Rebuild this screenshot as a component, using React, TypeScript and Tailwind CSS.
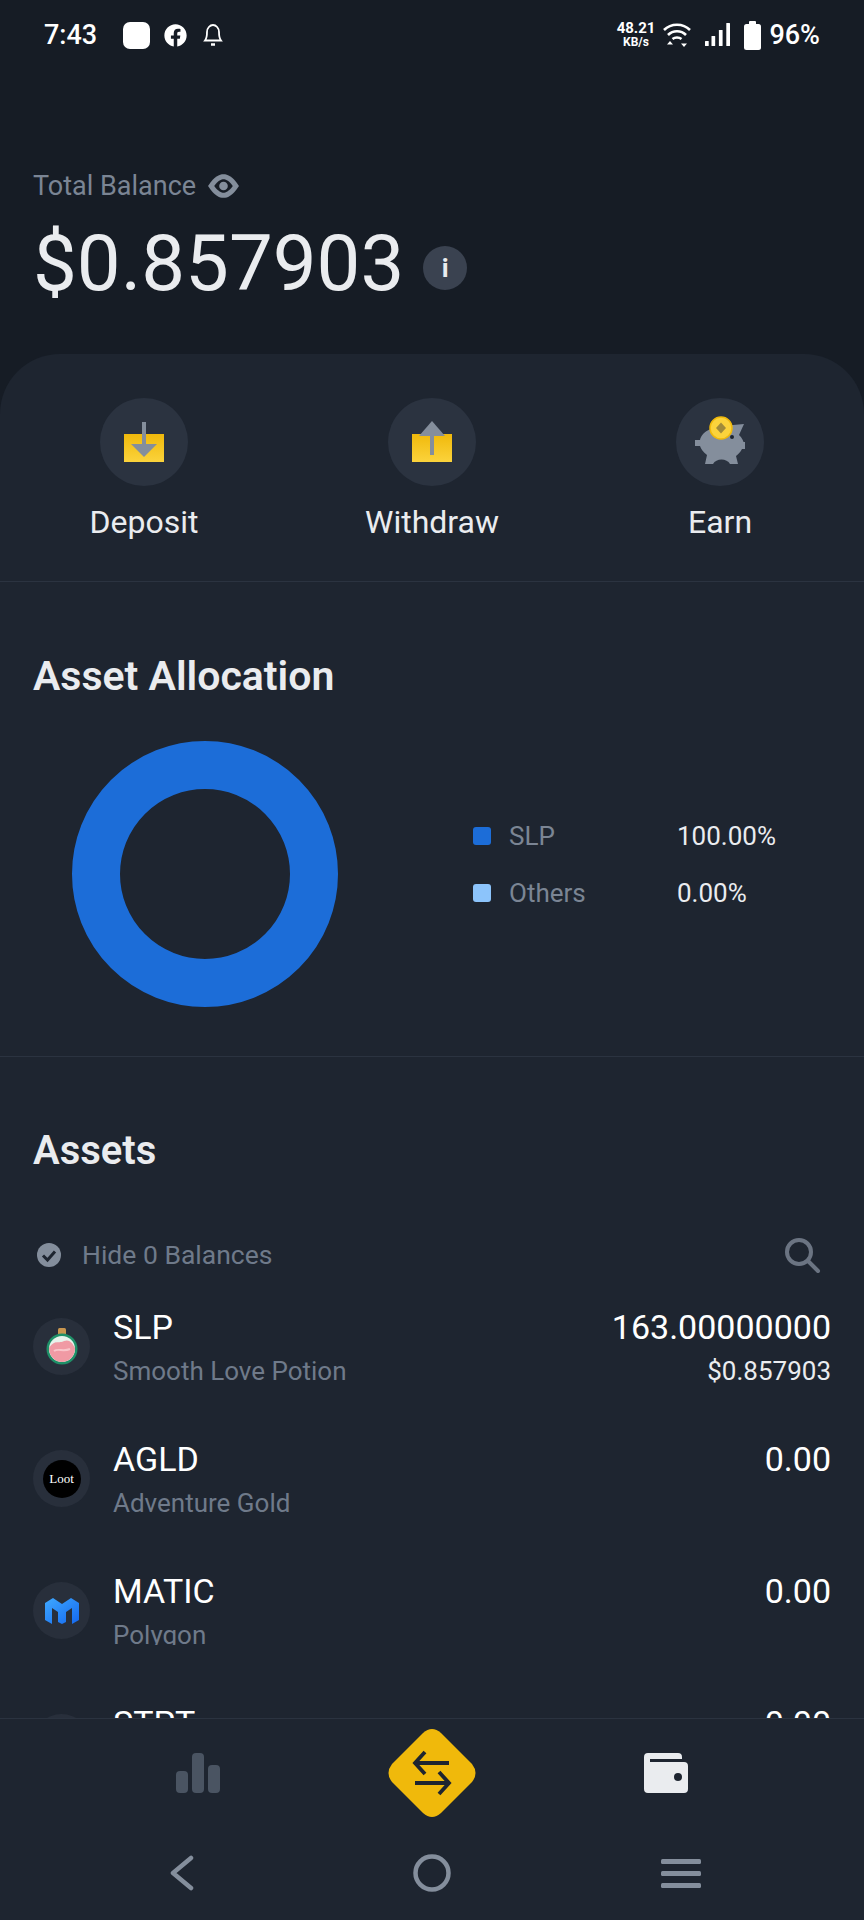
import React from "react";
import { FaFacebook } from "react-icons/fa";

const Wifi = () => (
  <svg width="28" height="26" viewBox="0 0 28 26" fill="none" stroke="#fff" strokeWidth="2.6">
    <path d="M1 8 C8 1 20 1 27 8" />
    <path d="M5 13 C10 8 18 8 23 13" />
    <path d="M9.5 17 C12 15 16 15 18.5 17" />
    <path d="M7 19 l-3 3.5 h6z M21 25 l-3 -3.5 h6z" fill="#fff" stroke="none" />
  </svg>
);
const Signal = () => (
  <svg width="25" height="24" viewBox="0 0 27 24" preserveAspectRatio="none" fill="#fff">
    <rect x="0" y="18" width="4" height="5" rx="0.5" />
    <rect x="7" y="13" width="4" height="10" rx="0.5" />
    <rect x="15" y="7" width="4" height="16" rx="0.5" />
    <rect x="23" y="0" width="4" height="23" rx="0.5" />
  </svg>
);
const Battery = () => (
  <svg width="17" height="29" viewBox="0 0 17 29" fill="#fff">
    <rect x="5" y="0" width="7" height="4" rx="1" />
    <rect x="0" y="3" width="17" height="26" rx="2.5" />
  </svg>
);
const Eye = () => (
  <svg width="33" height="26" viewBox="0 0 32 25">
    <path d="M1 12.5 C7 3 12 1 16 1 C20 1 25 3 31 12.5 C25 22 20 24 16 24 C12 24 7 22 1 12.5Z" fill="#848e9c" />
    <path d="M7 12.5 C11 7 14 6 16 6 C18 6 21 7 25 12.5 C21 18 18 19 16 19 C14 19 11 18 7 12.5Z" fill="#161c25" />
    <circle cx="16" cy="12.5" r="4.2" fill="#848e9c" />
  </svg>
);
const DepositIcon = () => (
  <svg width="44" height="44" viewBox="0 0 44 44">
    <defs>
      <linearGradient id="y1" x1="0" y1="0" x2="0" y2="1">
        <stop offset="0" stopColor="#f0b90b" />
        <stop offset="1" stopColor="#fbd33c" />
      </linearGradient>
    </defs>
    <rect x="2" y="14" width="40" height="28" fill="url(#y1)" />
    <rect x="20" y="2" width="4" height="22" fill="#848e9c" />
    <path d="M9 24 H35 L22 37Z" fill="#848e9c" />
  </svg>
);
const WithdrawIcon = () => (
  <svg width="44" height="44" viewBox="0 0 44 44">
    <rect x="2" y="14" width="40" height="28" fill="url(#y1)" />
    <path d="M9 16 L22 1 L35 16Z" fill="#848e9c" />
    <rect x="20" y="14" width="4" height="21" fill="#848e9c" />
  </svg>
);
const EarnIcon = () => (
  <svg width="52" height="52" viewBox="0 0 52 52">
    <path d="M39 9 L50 8 L45 19 C48 22 49 24 49.500 26 H51 V33 H48 C46 37 44 38 42 40 L44 48 L36 48 C33 42 22 42 19 48 L11 48 L13 39 C9 36 7 33 6 30 L1 30 V24 L6 24 C8 15 20 9 39 9Z" fill="#848e9c" />
    <circle cx="27" cy="12" r="11" fill="#fbd33c" stroke="#f0b90b" strokeWidth="1.5" />
    <path d="M27 6.500 L32 12 L27 17.500 L22 12Z" fill="#a08a3a" />
    <circle cx="38" cy="21" r="2" fill="#1e2530" />
  </svg>
);
const PotionIcon = () => (
  <svg width="32" height="38" viewBox="0 0 32 38">
    <rect x="12" y="0" width="8" height="7" rx="1.500" fill="#c9964f" />
    <circle cx="16" cy="21" r="15.500" fill="#1f9068" />
    <circle cx="16" cy="21" r="13" fill="#e8f3ec" />
    <path d="M3 20 C9 11 13 16 18 13 C23 11 26 14 29 20 C29 29 22 34 16 34 C9 34 3 28 3 20Z" fill="#f09aa4" />
    <path d="M8 23 C12 20 17 24 24 21" stroke="#f9c6cb" strokeWidth="2" fill="none" />
  </svg>
);
const MaticIcon = () => (
  <svg width="34" height="28" viewBox="0 0 34 28">
    <defs>
      <linearGradient id="m1" x1="0" y1="0" x2="1" y2="1">
        <stop offset="0" stopColor="#3fa9ff" />
        <stop offset="1" stopColor="#1468f0" />
      </linearGradient>
    </defs>
    <path d="M0 6 L8 1 L17 7 L26 1 L34 6 V23 L27 27 V11 L21 15 V25 L17 27 L13 25 V15 L7 11 V27 L0 23Z" fill="url(#m1)" />
  </svg>
);
const Search = () => (
  <svg width="38" height="38" viewBox="0 0 38 38" fill="none" stroke="#6b7482" strokeWidth="4" strokeLinecap="round">
    <circle cx="16" cy="16" r="12" />
    <path d="M25 25 L35 35" />
  </svg>
);

function Action({ icon, label }: { icon: React.ReactNode; label: string }) {
  return (
    <div className="flex w-[288px] flex-col items-center">
      <div className="flex h-[88px] w-[88px] items-center justify-center rounded-full bg-[#2b3340]">{icon}</div>
      <div className="mt-[14px] text-[32px] leading-[44px] text-[#eaecef]">{label}</div>
    </div>
  );
}

function Row({
  icon,
  sym,
  name,
  value,
  fiat,
  clipName,
}: {
  icon: React.ReactNode;
  sym: string;
  name?: string;
  value: string;
  fiat?: string;
  clipName?: boolean;
}) {
  return (
    <div className="flex h-[132px] shrink-0 items-start px-[33px]">
      <div className="mt-[11px] flex h-[57px] w-[57px] shrink-0 items-center justify-center rounded-full bg-[#282f3b]">
        {icon}
      </div>
      <div className="ml-[23px]">
        <div className="h-[46px] text-[34px] leading-[40px] text-white">{sym}</div>
        {name && (
          <div className={clipName ? "h-[28px] overflow-hidden text-[26px] leading-[36px] text-[#6f7a8a]" : "text-[26px] leading-[36px] text-[#6f7a8a]"}>
            {name}
          </div>
        )}
      </div>
      <div className="ml-auto text-right">
        <div className="h-[46px] text-[34px] leading-[40px] text-white">{value}</div>
        {fiat && <div className="text-[26px] leading-[36px] text-[#eaecef]">{fiat}</div>}
      </div>
    </div>
  );
}

export default function App() {
  return (
    <div className="flex h-[1920px] w-[864px] flex-col overflow-hidden bg-[#1e2530] font-['Roboto',sans-serif]">
      <div className="bg-[#161c25]">
        <div className="flex h-[70px] items-center pl-[44px] pr-[44px] text-white">
          <span className="text-[27px] font-medium leading-none">7:43</span>
          <span className="ml-[26px] h-[27px] w-[27px] rounded-[7px] bg-white" />
          <FaFacebook className="ml-[14px] text-[23px]" />
          <svg className="ml-[16px]" width="20" height="24" viewBox="0 0 20 24" fill="none" stroke="#fff" strokeWidth="1.800">
            <path d="M2 17.500 C4 15 4 12 4 9 C4 5 7 2 10 2 C13 2 16 5 16 9 C16 12 16 15 18 17.500Z" />
            <path d="M8 21.500 h4" strokeWidth="2.500" />
          </svg>
          <div className="ml-auto flex flex-col items-center font-bold text-white">
            <span className="text-[15px] leading-[15px]">48.21</span>
            <span className="text-[12px] leading-[13px]">KB/s</span>
          </div>
          <span className="ml-[8px] flex"><Wifi /></span>
          <span className="ml-[14px] flex"><Signal /></span>
          <span className="ml-[14px] flex"><Battery /></span>
          <span className="ml-[8px] text-[27px] font-medium leading-none">96%</span>
        </div>
        <div className="h-[284px] pl-[33px] pt-[98px]">
          <div className="flex items-center text-[27px] leading-[36px] text-[#7b8594]">
            Total Balance
            <span className="ml-[11px] flex"><Eye /></span>
          </div>
          <div className="mt-[16px] flex items-center">
            <span className="text-[78px] leading-[88px] text-[#eaecef]">$0.857903</span>
            <span className="ml-[19px] mt-[8px] flex h-[44px] w-[44px] items-center justify-center rounded-full bg-[#3a4250] text-[26px] font-bold leading-none text-[#eaecef]">
              i
            </span>
          </div>
        </div>
      </div>

      <div className="flex min-h-0 flex-1 flex-col bg-[#161c25]">
        <div className="flex min-h-0 flex-1 flex-col overflow-hidden rounded-t-[60px] bg-[#1e2530]">
          <div className="flex h-[228px] shrink-0 border-b border-[#2b3340] pt-[44px]">
            <Action icon={<DepositIcon />} label="Deposit" />
            <Action icon={<WithdrawIcon />} label="Withdraw" />
            <Action icon={<EarnIcon />} label="Earn" />
          </div>

          <div className="h-[475px] shrink-0 border-b border-[#2b3340] px-[33px] pt-[69px]">
            <div className="text-[41px] font-semibold leading-[50px] text-[#eaecef]">Asset Allocation</div>
            <div className="mt-[40px] flex items-center">
              <svg className="ml-[39px] shrink-0" width="266" height="266" viewBox="0 0 266 266">
                <circle cx="133" cy="133" r="109" fill="none" stroke="#1c6dd8" strokeWidth="48" />
              </svg>
              <div className="ml-[135px] flex flex-1 flex-col gap-[25px] pb-[19px] text-[26px] leading-[32px]">
                <div className="flex items-center">
                  <span className="h-[18px] w-[18px] rounded-[3px] bg-[#1c6dd8]" />
                  <span className="ml-[18px] w-[168px] text-[#7b8594]">SLP</span>
                  <span className="text-[#eaecef]">100.00%</span>
                </div>
                <div className="flex items-center">
                  <span className="h-[18px] w-[18px] rounded-[3px] bg-[#8cc4fb]" />
                  <span className="ml-[18px] w-[168px] text-[#7b8594]">Others</span>
                  <span className="text-[#eaecef]">0.00%</span>
                </div>
              </div>
            </div>
          </div>

          <div className="shrink-0 px-[33px] pt-[69px]">
            <div className="text-[40px] font-semibold leading-[50px] text-[#eaecef]">Assets</div>
            <div className="mt-[56px] flex h-[46px] items-center">
              <svg width="24" height="24" viewBox="0 0 24 24" className="ml-[4px] shrink-0">
                <circle cx="12" cy="12" r="12" fill="#848e9c" />
                <path d="M6 12.500 L10.500 17 L18 8.500" fill="none" stroke="#1e2530" strokeWidth="3" />
              </svg>
              <span className="ml-[21px] text-[26.5px] leading-[36px] text-[#6f7a8a]">Hide 0 Balances</span>
              <span className="ml-auto mr-[10px] flex"><Search /></span>
            </div>
          </div>

          <div className="flex min-h-0 flex-1 flex-col overflow-hidden pt-[29px]">
            <Row icon={<PotionIcon />} sym="SLP" name="Smooth Love Potion" value="163.00000000" fiat="$0.857903" />
            <Row
              icon={
                <div className="flex h-[38px] w-[38px] items-center justify-center rounded-full bg-black font-['Liberation_Serif',serif] text-[13px] text-white">
                  Loot
                </div>
              }
              sym="AGLD"
              name="Adventure Gold"
              value="0.00"
            />
            <Row icon={<MaticIcon />} sym="MATIC" name="Polygon" value="0.00" clipName />
            <Row icon={null} sym="STPT" value="0.00" />
          </div>
        </div>
      </div>

      <div className="h-[202px] shrink-0 border-t border-[#2b3340] bg-[#1e2530]">
        <div className="flex h-[108px] items-center justify-center">
          <svg className="mr-[167px]" width="44" height="40" viewBox="0 0 44 40" fill="#4a5462">
            <rect x="0" y="18" width="12" height="22" rx="4" />
            <rect x="16" y="0" width="12" height="40" rx="4" />
            <rect x="32" y="12" width="12" height="28" rx="4" />
          </svg>
          <svg width="90" height="90" viewBox="0 0 90 90">
            <path d="M36 5 Q45 -3 54 5 L85 36 Q92 45 85 54 L54 85 Q45 93 36 85 L5 54 Q-2 45 5 36Z" fill="#f0b90b" />
            <g fill="none" stroke="#1e2530" strokeWidth="3.800">
              <path d="M28 35 H62 M38 24 L28 35 L38 46" />
              <path d="M28 55 H62 M52 44 L62 55 L52 66" />
            </g>
          </svg>
          <svg className="ml-[167px]" width="44" height="40" viewBox="0 0 44 40">
            <path d="M4 0 H34 Q38 0 38 4 V6 H6 V9 H40 Q44 9 44 13 V36 Q44 40 40 40 H4 Q0 40 0 36 V4 Q0 0 4 0Z" fill="#eaecef" />
            <circle cx="34" cy="24" r="4" fill="#1e2530" />
          </svg>
        </div>
        <div className="flex h-[94px] items-start justify-center pt-[27px]">
          <svg className="ml-[6px] mr-[218px] mt-[1px]" width="26" height="36" viewBox="0 0 26 36" fill="none" stroke="#848e9c" strokeWidth="4.500" strokeLinecap="round" strokeLinejoin="round">
            <path d="M22 3 L4 18 L22 33" />
          </svg>
          <svg width="38" height="38" viewBox="0 0 38 38" fill="none" stroke="#848e9c" strokeWidth="4.500">
            <circle cx="19" cy="19" r="16.500" />
          </svg>
          <svg className="ml-[210px] mt-[1px]" width="40" height="36" viewBox="0 0 40 36" fill="#848e9c">
            <rect x="0" y="4" width="40" height="5" rx="1.500" />
            <rect x="0" y="16" width="40" height="5" rx="1.500" />
            <rect x="0" y="28" width="40" height="5" rx="1.500" />
          </svg>
        </div>
      </div>
    </div>
  );
}
